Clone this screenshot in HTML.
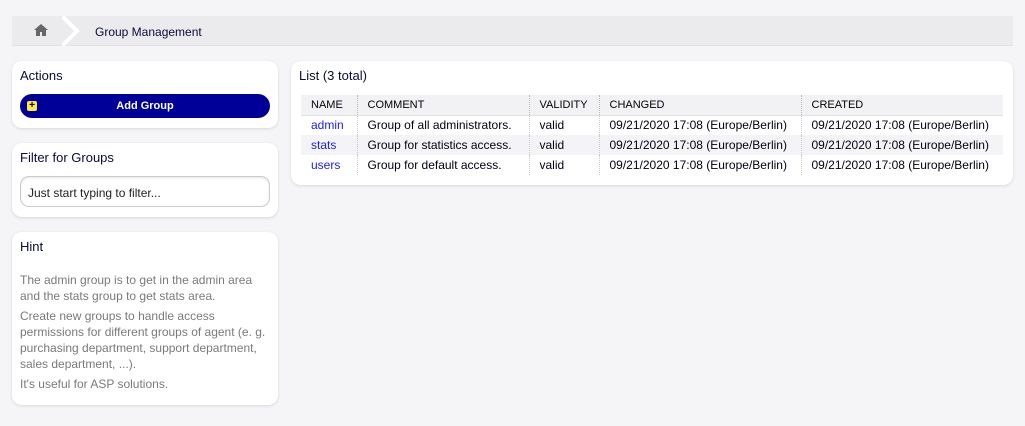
<!DOCTYPE html>
<html><head><style>
*{box-sizing:border-box;margin:0;padding:0}
body{width:1025px;height:426px;background:#f5f5f7;font-family:"Liberation Sans",sans-serif;font-size:12px;color:#001;position:relative;overflow:hidden}
.bc{position:absolute;left:12px;top:16px;width:1001px;height:30px;background:#ebebed;border-bottom:1px solid #e2e2e6}
.box{position:absolute;background:#fff;border-radius:10px;box-shadow:0 1px 3px rgba(0,0,0,.12)}
h2{font-size:13px;font-weight:normal;color:#0a0a3c;position:absolute;left:8px;top:7px}
table{position:absolute;left:10px;top:34px;width:702px;border-collapse:collapse}
th{background:#f2f2f4;font-weight:normal;font-size:11px;text-align:left;height:20px;padding:0 10px;border-left:1px dotted #bbb;border-bottom:1px solid #e0e0e0}
td{height:20px;padding:0 10px;border-left:1px dotted #ccc}
th:first-child,td:first-child{border-left:none}
tr:nth-child(odd) td{background:#f4f4f6}
a{color:#1a1aff;text-decoration:none}
.hint p{color:#7a7a7a;font-size:12px;line-height:16px;margin-bottom:4px}
</style></head><body>
<div class="bc">
<svg style="position:absolute;left:22px;top:8px" width="14" height="12" viewBox="0 0 14 12"><path d="M7 0L0 6h2v6h4V8h2v4h4V6h2z" fill="#666"/></svg>
<svg style="position:absolute;left:50px;top:0" width="20" height="30"><path d="M0 0L15 15L0 30" fill="none" stroke="#fff" stroke-width="4"/></svg>
<div style="position:absolute;left:83px;top:9px;font-size:12px;color:#0a0a3c">Group Management</div>
</div>
<div class="box" style="left:12px;top:61px;width:266px;height:67px">
<h2>Actions</h2>
<div style="position:absolute;left:8px;top:33px;width:250px;height:24px;background:#000099;border-radius:12px;color:#fff;text-align:center;line-height:24px;font-weight:bold;font-size:11px">Add Group
<span style="position:absolute;left:7px;top:7px;width:10px;height:10px;background:#ffeb3b;border-radius:2px;color:#000;font-size:10px;line-height:10px;font-weight:bold">+</span></div>
</div>
<div class="box" style="left:12px;top:143px;width:266px;height:74px">
<h2>Filter for Groups</h2>
<div style="position:absolute;left:8px;top:33px;width:250px;height:31px;border:1px solid #ccc;border-radius:9px;padding:9px 7px;color:#222;box-shadow:inset 0 1px 2px rgba(0,0,0,.1)">Just start typing to filter...</div>
</div>
<div class="box hint" style="left:12px;top:232px;width:266px;height:173px">
<h2>Hint</h2>
<div style="position:absolute;left:8px;top:40px;width:255px">
<p>The admin group is to get in the admin area and the stats group to get stats area.</p>
<p>Create new groups to handle access permissions for different groups of agent (e. g. purchasing department, support department, sales department, ...).</p>
<p>It's useful for ASP solutions.</p></div>
</div>
<div class="box" style="left:291px;top:61px;width:722px;height:124px">
<h2>List (3 total)</h2>
<table>
<tr><th style="width:56px">NAME</th><th style="width:172px">COMMENT</th><th style="width:70px">VALIDITY</th><th style="width:202px">CHANGED</th><th>CREATED</th></tr>
<tr><td><a>admin</a></td><td>Group of all administrators.</td><td>valid</td><td>09/21/2020 17:08 (Europe/Berlin)</td><td>09/21/2020 17:08 (Europe/Berlin)</td></tr>
<tr><td><a>stats</a></td><td>Group for statistics access.</td><td>valid</td><td>09/21/2020 17:08 (Europe/Berlin)</td><td>09/21/2020 17:08 (Europe/Berlin)</td></tr>
<tr><td><a>users</a></td><td>Group for default access.</td><td>valid</td><td>09/21/2020 17:08 (Europe/Berlin)</td><td>09/21/2020 17:08 (Europe/Berlin)</td></tr>
</table>
</div>
</body></html>
